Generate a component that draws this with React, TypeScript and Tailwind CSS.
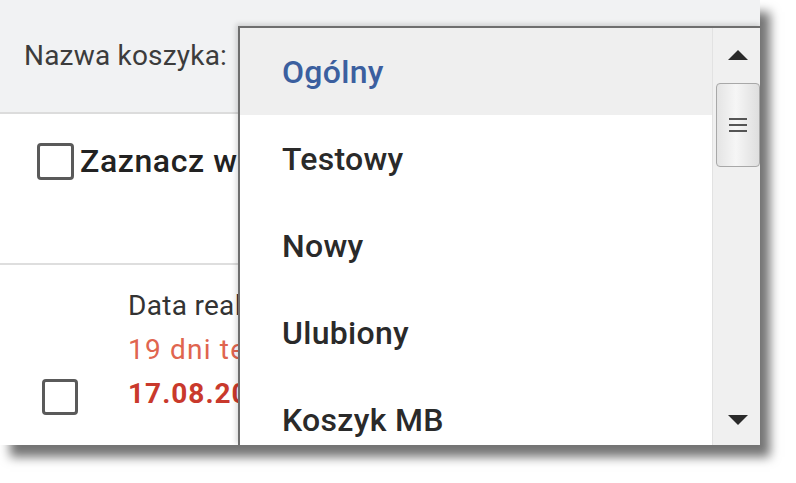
import React from 'react';

const ITEMS = ['Ogólny', 'Testowy', 'Nowy', 'Ulubiony', 'Koszyk MB'];

const Box: React.FC<{ className?: string }> = ({ className }) => (
  <span className={`block shrink-0 rounded-[4px] border-[3px] border-[#5a5a5a] bg-white ${className ?? ''}`} />
);

const Scrollbar: React.FC = () => (
  <div className="flex w-[50px] shrink-0 flex-col items-center border-l border-[#e2e2e2] bg-[#f0f0f0]">
    <svg width="22" height="12" viewBox="0 0 22 12" className="mt-[21px]">
      <path d="M11 1 L21 11 H1 Z" fill="#2a2a2a" />
    </svg>
    <div className="mt-[22px] flex h-[84px] w-[44px] flex-col items-center justify-center gap-[4px] rounded-[4px] border border-[#a8a8a8] bg-[linear-gradient(90deg,#e4e4e4,#f6f6f6_45%,#dedede)]">
      <span className="block h-[2px] w-[18px] bg-[#555]" />
      <span className="block h-[2px] w-[18px] bg-[#555]" />
      <span className="block h-[2px] w-[18px] bg-[#555]" />
    </div>
    <div className="flex-1" />
    <svg width="22" height="12" viewBox="0 0 22 12" className="mb-[20px]">
      <path d="M1 1 H21 L11 11 Z" fill="#2a2a2a" />
    </svg>
  </div>
);

export default function App() {
  return (
    <div className="h-[483px] w-[796px] overflow-hidden bg-white" style={{ fontFamily: 'Roboto, "Liberation Sans", sans-serif' }}>
      <div className="relative h-[445px] w-[760px] overflow-hidden bg-white shadow-[10px_12px_10px_rgba(0,0,0,0.55)]">
        {/* header */}
        <div className="flex h-[114px] items-center border-b-2 border-[#dcdcdc] bg-[#f1f2f3] pl-[24px]">
          <span className="text-[28px] leading-none tracking-[0.2px] text-[#3c3c3c]">Nazwa koszyka:</span>
        </div>

        {/* select all row */}
        <div className="flex h-[151px] items-start gap-[6px] border-b-2 border-[#dedede] pl-[37px] pt-[29px]">
          <Box className="h-[37px] w-[37px]" />
          <span className="text-[32px] font-medium leading-[37px] tracking-[0.6px] text-[#222]">Zaznacz wszystkie</span>
        </div>

        {/* item row */}
        <div className="flex pl-[42px]">
          <Box className="mt-[114px] h-[36px] w-[36px]" />
          <div className="ml-[50px] flex flex-col pt-[19px] text-[28px] leading-[44px]">
            <span className="tracking-[0.3px] text-[#333]">Data realizacji:</span>
            <span className="tracking-[1.2px] text-[#e0654f]">19 dni temu</span>
            <span className="font-bold tracking-[1px] text-[#c9392c]">17.08.2023</span>
          </div>
        </div>

        {/* open dropdown */}
        <div className="absolute left-[238px] top-[26px] flex h-[420px] w-[524px] border-l-2 border-t-2 border-[#6e6e6e] bg-white shadow-[-2px_-2px_5px_rgba(0,0,0,0.15)]">
          <ul className="flex-1">
            {ITEMS.map((item, i) => (
              <li
                key={item}
                className={`flex h-[87px] items-center pl-[42px] text-[32px] font-medium leading-none tracking-[0.3px] ${
                  i === 0 ? 'bg-[#efefef] text-[#3b5f9f]' : 'text-[#2a2a2a]'
                }`}
              >
                {item}
              </li>
            ))}
          </ul>
          <Scrollbar />
        </div>
      </div>
    </div>
  );
}
